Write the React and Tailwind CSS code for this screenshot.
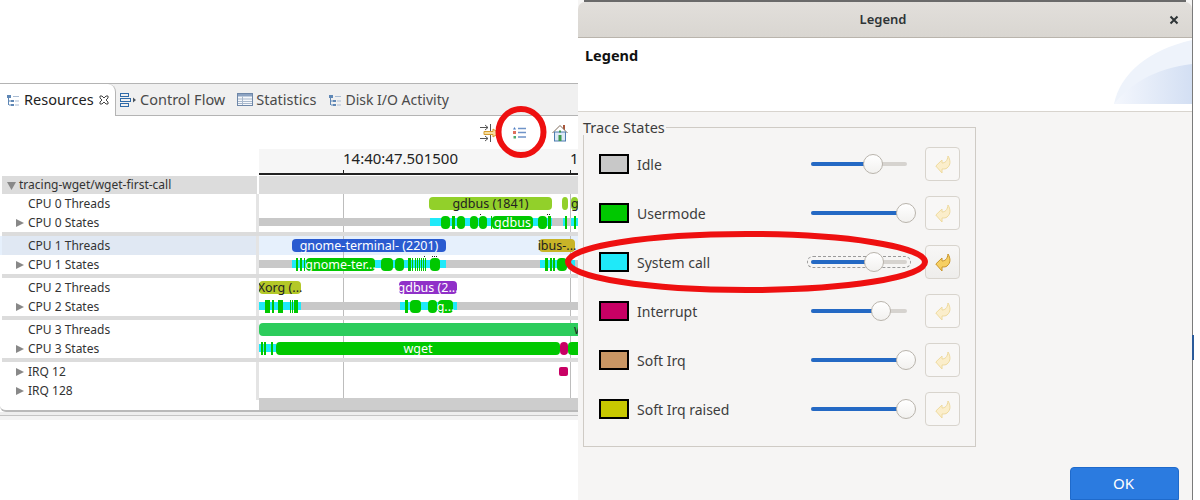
const GREEN = '#00c800';
const CYAN = '#1fe9f9';
const GRAY = '#c8c8c8';
const PINK = '#c80064';

// segments are [start, end] in px from the left edge of the timeline
const g = (a, b, label) => ({ a, b, fill: GREEN, tall: true, label, color: '#fff' });
const c = (a, b) => ({ a, b, fill: CYAN });
const i = (a, b) => ({ a, b, fill: GRAY });

const rows = [
  {
    label: 'CPU 0 Threads',
    bars: [
      { a: 170, b: 293, fill: '#92d02a', tall: true, label: 'gdbus (1841)', color: '#222' },
      { a: 303, b: 309, fill: '#92d02a', tall: true },
      { a: 312, b: 319, fill: '#92d02a', tall: true, label: 'g', color: '#222', left: true },
    ],
  },
  {
    label: 'CPU 0 States',
    arrow: true,
    end: true,
    dots: [221, 288, 290],
    bars: [
      i(0, 171), c(171, 293),
      g(182, 191), g(193, 196), g(198, 206), g(211, 219), g(220, 228), g(232, 233),
      g(233, 274, 'gdbus'), g(279, 288), g(289, 292),
      i(293, 304), c(304, 319), g(306, 308), i(308, 312), g(315, 317),
    ],
  },
  {
    label: 'CPU 1 Threads',
    hi: true,
    bars: [
      { a: 33, b: 187, fill: '#2a5bd0', tall: true, label: 'gnome-terminal- (2201)', color: '#fff' },
      { a: 280, b: 316, fill: '#c8b428', tall: true, label: 'ibus-...', color: '#222' },
    ],
  },
  {
    label: 'CPU 1 States',
    arrow: true,
    end: true,
    dots: [165, 173, 175, 177],
    bars: [
      i(0, 33), c(33, 187),
      g(37, 39), g(41, 43), g(45, 46), g(47, 116, 'gnome-ter...'), g(122, 134), g(136, 145),
      g(149, 152), g(153, 154), g(156, 157), g(158, 159), g(160, 161), g(162, 163), g(164, 165), g(166, 167), g(171, 181),
      i(187, 281), c(281, 319), g(286, 289), g(291, 293), g(294, 296), g(298, 308), i(316, 319),
    ],
  },
  {
    label: 'CPU 2 Threads',
    bars: [
      { a: 0, b: 42, fill: '#b4c828', tall: true, label: 'Xorg (...', color: '#222' },
      { a: 140, b: 198, fill: '#9030c8', tall: true, label: 'gdbus (2...', color: '#fff' },
    ],
  },
  {
    label: 'CPU 2 States',
    arrow: true,
    end: true,
    bars: [
      c(0, 42), g(6, 11), g(13, 15), g(19, 24), g(31, 32), g(33, 34), g(35, 39),
      i(42, 141), c(141, 198), g(146, 149), g(151, 162), g(169, 178), g(179, 194, 'g...'),
      i(198, 319),
    ],
  },
  {
    label: 'CPU 3 Threads',
    bars: [{ a: 0, b: 330, fill: '#2ccc5c', tall: true, label: 'w', color: '#222', left: true, at: 315 }],
  },
  {
    label: 'CPU 3 States',
    arrow: true,
    end: true,
    bars: [
      c(0, 17), g(2, 4), g(5, 7), g(12, 14),
      g(17, 301, 'wget'),
      { a: 301, b: 309, fill: PINK, tall: true },
      g(309, 330),
    ],
  },
  { label: 'IRQ 12', arrow: true, bars: [{ a: 300, b: 309, fill: PINK, small: true }] },
  { label: 'IRQ 128', arrow: true, bars: [] },
];

function Track({ bars, dots = [] }) {
  return (
    <svg width="319" height="19" className="block shrink-0">
      <line x1="84.5" y1="0" x2="84.5" y2="19" stroke="#bdbdbd" />
      <line x1="311.5" y1="0" x2="311.5" y2="19" stroke="#bdbdbd" />
      {dots.map((d) => (
        <rect key={d} x={d} y="1" width="1" height="1" fill="#222" />
      ))}
      {bars.map((s, n) => {
        const w = s.b - s.a;
        if (s.small) return <rect key={n} x={s.a} y="5" width={w} height="9" rx="2" fill={s.fill} />;
        if (!s.tall) return <rect key={n} x={s.a} y="5" width={w} height="8" fill={s.fill} />;
        return (
          <g key={n}>
            <rect x={s.a} y="3" width={w} height="13" rx={w > 5 ? 4 : 0} fill={s.fill} />
            {s.label && (
              <text
                x={s.at ?? (s.left ? s.a : (s.a + s.b) / 2)}
                y="14"
                textAnchor={s.left ? 'start' : 'middle'}
                fill={s.color}
                fontSize="12.5"
              >
                {s.label}
              </text>
            )}
          </g>
        );
      })}
    </svg>
  );
}

function Row({ row }) {
  return (
    <div className={`flex h-[19px] ${row.hi ? 'bg-[#e6f0fc]' : ''}`}>
      <div className={`w-[254px] ml-[2px] flex items-center shrink-0 text-[12px] text-[#333] ${row.hi ? 'bg-[#e0e8f3]' : ''}`}>
        <span className="w-[12px] ml-[14px] shrink-0">
          {row.arrow && (
            <svg width="8" height="8" className="block">
              <path d="M0 0 L8 4 L0 8 Z" fill="#888" />
            </svg>
          )}
        </span>
        {row.label}
      </div>
      <div className="w-[3px] shrink-0 bg-[#e4e4e4]" />
      <Track bars={row.bars} dots={row.dots} />
    </div>
  );
}

function TreeIcon() {
  return (
    <svg width="14" height="14" viewBox="0 0 14 14" className="shrink-0">
      <g fill="#5f87b5">
        <rect x="1" y="2" width="4" height="3" />
        <rect x="5" y="7" width="3" height="2" />
        <rect x="5" y="11" width="3" height="2" />
        <rect x="2" y="5" width="1" height="7" />
        <rect x="3" y="7.5" width="2" height="1" />
        <rect x="3" y="11.5" width="2" height="1" />
      </g>
      <g fill="#a9bcd3">
        <rect x="7" y="3" width="6" height="1" />
        <rect x="9" y="7.5" width="4" height="1" />
        <rect x="9" y="11.5" width="4" height="1" />
      </g>
    </svg>
  );
}

function FlowIcon() {
  return (
    <svg width="16" height="14" viewBox="0 0 16 14" className="shrink-0">
      <g fill="none" stroke="#2f6aa8">
        <rect x="0.5" y="0.5" width="8" height="3" />
        <rect x="0.5" y="5.5" width="10" height="3" />
        <rect x="0.5" y="10.5" width="8" height="3" />
      </g>
      <path d="M11 7 h2 v-2.5 l3 2.5 l-3 2.5 v-2.5" fill="#4a5560" />
    </svg>
  );
}

function TableIcon() {
  return (
    <svg width="16" height="13" viewBox="0 0 16 13" className="shrink-0">
      <rect x="0.5" y="0.5" width="15" height="12" fill="#f6f8fb" stroke="#6e87a8" />
      <rect x="1" y="1" width="14" height="2.5" fill="#8ca3c2" />
      <path d="M1 6 H15 M1 8.5 H15 M1 10.5 H15 M5.5 3.5 V12" stroke="#a8b8cc" fill="none" />
    </svg>
  );
}

function SyncIcon() {
  return (
    <svg width="22" height="18" viewBox="0 0 22 18">
      <g stroke="#555" fill="none">
        <path d="M1 3.5 H9 M6 1 L9 3.5 L6 6 M11.5 0 V7" />
        <path d="M1 14.5 H9 M6 12 L9 14.5 L6 17 M11.5 11 V18" />
      </g>
      <path d="M5 7.5 H14 V5 L20 9 L14 13 V10.5 H5 Z" fill="#f7dfa0" stroke="#d69c2c" />
    </svg>
  );
}

function ListIcon() {
  return (
    <svg width="13" height="12" viewBox="0 0 13 12">
      <path d="M1.5 0 L3 2.5 H0 Z" fill="#4f7fc4" />
      <rect x="0" y="4" width="3" height="3" fill="#e0705c" />
      <rect x="0.5" y="9" width="2.5" height="2.5" fill="#4caa6c" />
      <path d="M5 1.5 H13 M5 5.5 H13 M5 10 H13" stroke="#6f93c8" strokeWidth="1.4" />
    </svg>
  );
}

function HomeIcon() {
  return (
    <svg width="16" height="18" viewBox="0 0 16 18">
      <rect x="11" y="1" width="2" height="5" fill="#a9563a" />
      <path d="M0.5 9 L8 1.5 L15.5 9" fill="#fff" stroke="#7d6a5a" />
      <rect x="2.5" y="8" width="11" height="9" fill="#dce8f6" stroke="#4d7cb0" />
      <rect x="6.5" y="11" width="3" height="6" fill="#3d9a4e" />
      <rect x="7" y="6.5" width="2" height="2" fill="#3d9a4e" />
    </svg>
  );
}

function ResetArrow({ active }) {
  return (
    <svg width="16" height="19" viewBox="0 0 16 19">
      <path
        d="M0.8 11 L7 5 V8 C10 8 12.5 6 13 1 C15.5 5 16 10 12 13 C10.8 14 9 14 7 14 V18 Z"
        fill={active ? '#f6cf62' : '#fbeecb'}
        stroke={active ? '#c9952a' : '#eeda9e'}
        strokeLinejoin="round"
      />
    </svg>
  );
}

function Slider({ at, focus }) {
  return (
    <div className={`relative w-[96px] h-[4px] rounded-full bg-[#d6d3cf] ${focus ? 'outline-dashed outline-1 outline-offset-[3px] outline-[#9a9a9a]' : ''}`}>
      <div className="h-full rounded-full bg-[#2469c4]" style={{ width: at }} />
      <div
        className="absolute top-1/2 -translate-y-1/2 -translate-x-1/2 w-[20px] h-[20px] rounded-full bg-gradient-to-b from-white to-[#f2f1ef] border border-[#b9b4ac]"
        style={{ left: at }}
      />
    </div>
  );
}

const states = [
  { name: 'Idle', color: '#c8c8c8', at: 62 },
  { name: 'Usermode', color: '#00c800', at: 95 },
  { name: 'System call', color: '#1fe9f9', at: 63, active: true },
  { name: 'Interrupt', color: '#c80064', at: 70 },
  { name: 'Soft Irq', color: '#c89664', at: 95 },
  { name: 'Soft Irq raised', color: '#c8c800', at: 95 },
];

function Dialog() {
  return (
    <div className="absolute left-[578px] top-0 w-[614px] h-[500px] flex flex-col bg-[#f6f5f4]">
      <div className="h-[2px] bg-[#6a6a6a] ml-[6px] mr-[6px] shrink-0" />
      <div className="relative h-[36px] shrink-0 rounded-t-[7px] bg-gradient-to-b from-[#e2dfdb] to-[#d9d6d1] border-b border-[#b9b4ac] flex items-center justify-center pr-[4px] text-[13px] font-semibold text-[#2e3436]">
        Legend
        <svg width="10" height="10" viewBox="0 0 10 10" className="absolute left-[591px] top-[13px]">
          <path d="M1.5 1.5 L8.5 8.5 M8.5 1.5 L1.5 8.5" stroke="#2e3436" strokeWidth="2" />
        </svg>
      </div>
      <div className="relative h-[74px] shrink-0 bg-white border-b border-[#d8d4ce] px-[7px] pt-[7px] text-[14.5px] font-bold text-[#111]">
        Legend
        <svg width="78" height="66" viewBox="0 0 78 66" className="absolute right-0 top-0">
          <defs>
            <linearGradient id="corner" x1="0" y1="0" x2="1" y2="0">
              <stop offset="0" stopColor="#f4f7fd" />
              <stop offset="1" stopColor="#d3dff3" />
            </linearGradient>
          </defs>
          <path d="M0 66 C6 36 34 12 78 2 V66 Z" fill="#eef3fb" />
          <path d="M0 66 C14 48 40 30 78 26 V66 Z" fill="url(#corner)" />
        </svg>
      </div>
      <div className="relative ml-[5px] mt-[15px] w-[393px] h-[320px] shrink-0 border border-[#cfcbc5] pt-[19px] pl-[15px] pr-[15px]">
        <span className="absolute -left-px -top-[9px] bg-[#f6f5f4] pr-[1px] text-[14.5px] leading-[16px] text-[#3d3d3d]">Trace States</span>
        <div className="flex flex-col gap-[15px]">
          {states.map((s) => (
            <div key={s.name} className="flex items-center h-[34px] text-[14px] text-[#3d3d3d]">
              <div className="w-[30px] h-[20px] border-2 border-black shrink-0" style={{ backgroundColor: s.color }} />
              <span className="ml-[8px] w-[174px] shrink-0">{s.name}</span>
              <Slider at={s.at} focus={s.active} />
              <button
                className={`ml-[18px] w-[35px] h-[34px] shrink-0 rounded-[4px] border border-[#d8d4cd] flex items-center justify-center ${s.active ? 'bg-gradient-to-b from-[#f8f7f6] to-[#eeedeb]' : 'bg-[#f8f7f6]'}`}
              >
                <ResetArrow active={s.active} />
              </button>
            </div>
          ))}
        </div>
      </div>
      <div className="flex justify-end mt-[20px] pr-[13px] flex-1">
        <button className="w-[109px] h-full rounded-t-[4px] bg-[#2b7be0] border border-[#1f6acb] text-white text-[15px] pr-[2px]">OK</button>
      </div>
    </div>
  );
}

export default function App() {
  return (
    <div className="relative w-[1200px] h-[500px] overflow-hidden bg-white font-['Noto_Sans',sans-serif]">
      <div className="pt-[83px] w-[578px]">
        <div className="flex h-[33px] items-stretch bg-[#f0f0f0] border-y border-[#b4b4b4] text-[14.5px] text-[#4a4a4a] pr-2">
          <div className="flex items-center gap-[4px] pl-[6px] pr-[6px] w-[116px] -mb-px bg-white rounded-tr-[8px] border-r border-[#b4b4b4] text-[#222]">
            <TreeIcon />
            Resources
            <svg width="10" height="10" viewBox="0 0 10 10" className="ml-auto shrink-0">
              <path d="M1 1 L3 1 L5 3 L7 1 L9 1 L9 3 L7 5 L9 7 L9 9 L7 9 L5 7 L3 9 L1 9 L1 7 L3 5 L1 3 Z" fill="none" stroke="#444" />
            </svg>
          </div>
          <div className="flex items-center gap-[4px] pl-[4px] pr-[5px]"><FlowIcon />Control Flow</div>
          <div className="flex items-center gap-[3px] pl-[7px] pr-[4px]"><TableIcon />Statistics</div>
          <div className="flex items-center gap-[3px] pl-[8px] text-[14px]"><TreeIcon />Disk I/O Activity</div>
        </div>
        <div className="relative h-[33px] flex items-center">
          <div className="ml-[479px]"><SyncIcon /></div>
          <div className="ml-[12px]"><ListIcon /></div>
          <div className="ml-[26px]"><HomeIcon /></div>
        </div>
        <div className="flex h-[26px] mb-[1px]">
          <div className="w-[259px] shrink-0" />
          <div className="relative flex-1 bg-[#f6f6f6] border-b-[2px] border-[#222] text-[15px] leading-[18px] text-[#222] overflow-hidden">
            <span className="absolute left-[84px] top-0">14:40:47.501500</span>
            <span className="absolute left-[311px] top-0">14:40:47</span>
            <div className="absolute left-[84px] bottom-0 w-[1px] h-[3px] bg-[#222]" />
            <div className="absolute left-[311px] bottom-0 w-[1px] h-[3px] bg-[#222]" />
          </div>
        </div>
        <div className="flex h-[18px]">
          <div className="w-[255px] ml-[2px] shrink-0 bg-[#dcdcdc] flex items-center text-[12px] text-[#333]">
            <svg width="9" height="9" className="ml-[5px] mr-[3px] shrink-0"><path d="M0 1 H9 L4.5 9 Z" fill="#888" /></svg>
            tracing-wget/wget-first-call
          </div>
          <div className="w-[319px] ml-[2px] bg-[#dcdcdc]" />
        </div>
        <div>
          {rows.map((row) => (
            <div key={row.label}>
              <Row row={row} />
              {row.end && <div className="h-[4px] ml-[2px] bg-[#dcdcdc]" />}
            </div>
          ))}
        </div>
        <div className="relative h-[14px] -mt-[2px] border-b-[2px] border-[#b9b9b9] rounded-bl-[6px]">
          <div className="ml-[259px] h-[12px] bg-[#cdcdcd]" />
        </div>
        <div className="h-[4px] bg-[#eeeeee] border-b border-[#c4c4c4]" />
        <div className="h-[4px] bg-[#f3f3f3]" />
      </div>

      <Dialog />

      <div className="absolute left-[1192px] top-0 w-[1px] h-[500px] bg-[#7a7a7a]" />
      <div className="absolute left-[1192px] top-[335px] w-[2px] h-[25px] bg-[#2a5a9a]" />

      <svg width="1200" height="500" className="absolute inset-0 pointer-events-none">
        <ellipse cx="521" cy="132" rx="22.5" ry="23" fill="none" stroke="#ee1010" strokeWidth="6" />
        <ellipse cx="746.5" cy="262" rx="178.5" ry="28" fill="none" stroke="#ee1010" strokeWidth="6" />
      </svg>
    </div>
  );
}
